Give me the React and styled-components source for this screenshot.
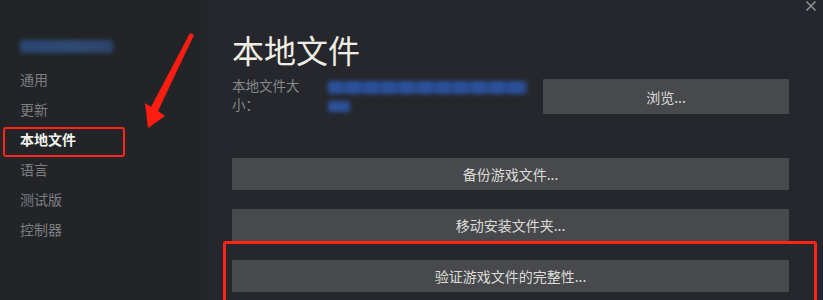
import React from "react";
import styled, { createGlobalStyle } from "styled-components";

const Global = createGlobalStyle`
  html, body { margin: 0; padding: 0; background: #25272c; }
  body { font-family: "Noto Sans CJK SC", "Noto Sans", sans-serif; }
  * { box-sizing: border-box; }
`;

const Frame = styled.div`
  position: relative;
  width: 823px;
  height: 300px;
  overflow: hidden;
  display: flex;
  background: #25272c;
`;

const Sidebar = styled.nav`
  width: 207px;
  flex: none;
  background: #222427;
  padding-top: 40px;
  display: flex;
  flex-direction: column;
`;

const BlurBar = styled.div`
  width: ${(p) => p.$w}px;
  height: ${(p) => p.$h}px;
  margin-left: ${(p) => p.$ml || 0}px;
  background: ${(p) => p.$c};
  filter: blur(${(p) => p.$b || 1.5}px);
  border-radius: 2px;
  opacity: 0.9;
`;

const NavList = styled.ul`
  list-style: none;
  margin: 11px 0 0;
  padding: 0;
`;

const NavItem = styled.li`
  position: relative;
  height: 30px;
  line-height: 30px;
  padding-left: 20px;
  font-size: 14px;
  color: ${(p) => (p.$active ? "#f4f4f2" : "#7c7e82")};
  font-weight: ${(p) => (p.$active ? 700 : 400)};
  ${(p) =>
    p.$active &&
    `
    &::after {
      content: "";
      position: absolute;
      left: 3px;
      top: 3px;
      width: 118px;
      height: 26px;
      border: 2.5px solid #ff2418;
      border-radius: 3px;
    }
  `}
`;

const Main = styled.main`
  flex: 1;
  padding: 29px 34px 0 25px;
  display: flex;
  flex-direction: column;
`;

const Title = styled.h1`
  margin: 0;
  font-size: 32px;
  line-height: 40px;
  font-weight: 400;
  color: #f1eee4;
`;

const SizeRow = styled.div`
  margin-top: 7px;
  display: flex;
  align-items: flex-start;
`;

const SizeLabel = styled.div`
  width: 72px;
  flex: none;
  font-size: 13.5px;
  line-height: 19px;
  color: #86888b;
`;

const SizeValue = styled.div`
  flex: 1;
  margin-left: 24px;
  padding-top: 5px;
  display: flex;
  flex-direction: column;
  gap: 7px;
`;

const Button = styled.button`
  display: block;
  width: ${(p) => (p.$w ? `${p.$w}px` : "100%")};
  height: ${(p) => p.$h || 32}px;
  flex: none;
  border: none;
  border-radius: 1px;
  background: #47494d;
  color: #dcdcd6;
  font-family: inherit;
  font-size: 14px;
  padding: 0;
  margin: ${(p) => p.$m || "0"};
  cursor: pointer;
`;

const ActionList = styled.div`
  margin-top: 44px;
  display: flex;
  flex-direction: column;
  gap: 19px;
`;

const Callout = styled.div`
  position: relative;
  &::after {
    content: "";
    position: absolute;
    left: -9px;
    right: -28px;
    top: -19px;
    height: 80px;
    border: 3px solid #ff2418;
    border-radius: 3px;
    pointer-events: none;
  }
`;

const Close = styled.svg`
  position: absolute;
  right: 6px;
  top: 0px;
`;

const Arrow = styled.svg`
  position: absolute;
  left: 140px;
  top: 28px;
`;

const navItems = ["通用", "更新", "本地文件", "语言", "测试版", "控制器"];

export default function App() {
  return (
    <Frame>
      <Global />
      <Sidebar>
        <BlurBar $w={93} $h={13} $ml={20} $b={2} $c="linear-gradient(90deg,#2a4a7a,#324f7c 60%,#2c4670)" />
        <NavList>
          {navItems.map((n) => (
            <NavItem key={n} $active={n === "本地文件"}>
              {n}
            </NavItem>
          ))}
        </NavList>
      </Sidebar>
      <Main>
        <Title>本地文件</Title>
        <SizeRow>
          <SizeLabel>本地文件大小：</SizeLabel>
          <SizeValue>
            <BlurBar $w={199} $h={13} $b={2.2} $c="repeating-linear-gradient(90deg,#2d56a6 0 14px,#274a8e 14px 18px)" />
            <BlurBar $w={22} $h={11} $b={2} $c="#2d56a6" />
          </SizeValue>
          <Button $w={246} $h={35} $m="3px 0 0 16px">浏览...</Button>
        </SizeRow>
        <ActionList>
          <Button>备份游戏文件...</Button>
          <Button>移动安装文件夹...</Button>
          <Callout>
            <Button>验证游戏文件的完整性...</Button>
          </Callout>
        </ActionList>
      </Main>
      <Close width="12" height="12" viewBox="0 0 12 12">
        <path d="M1.5 1.5 L10.5 10.5 M10.5 1.5 L1.5 10.5" stroke="#8d8f92" strokeWidth="1.6" />
      </Close>
      <Arrow width="60" height="105" viewBox="0 0 60 105">
        <polygon
          points="50,5 54,7 18,83 25,88 8,100 5,75 11,79"
          fill="#ff1c10"
        />
      </Arrow>
    </Frame>
  );
}
